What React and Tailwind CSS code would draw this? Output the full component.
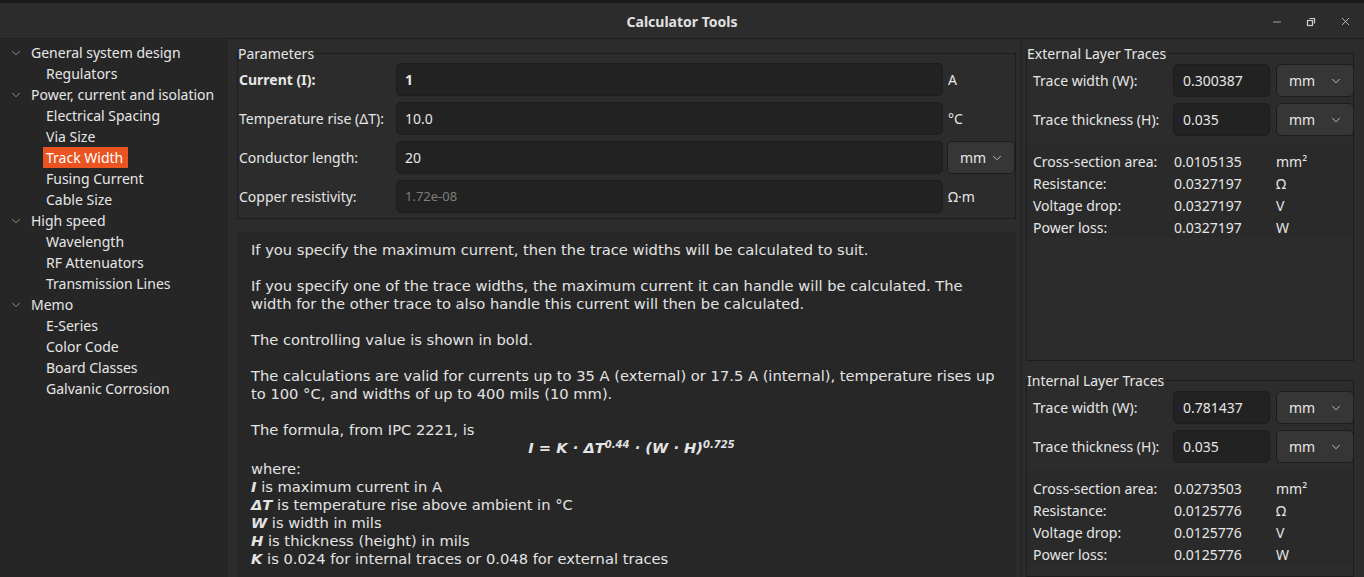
import { ChevronDown, Minus, X } from "lucide-react";

const ui = { fontFamily: '"Noto Sans", "Open Sans", sans-serif' };
const body = { fontFamily: '"DejaVu Sans", sans-serif' };

const tree = [
  { label: "General system design", children: ["Regulators"] },
  {
    label: "Power, current and isolation",
    children: ["Electrical Spacing", "Via Size", "Track Width", "Fusing Current", "Cable Size"],
  },
  { label: "High speed", children: ["Wavelength", "RF Attenuators", "Transmission Lines"] },
  { label: "Memo", children: ["E-Series", "Color Code", "Board Classes", "Galvanic Corrosion"] },
];

function Sidebar() {
  return (
    <div className="w-[228px] shrink-0 bg-[#262626] pt-[3px] text-[14px] text-[#e6e6e6]">
      {tree.map((g) => (
        <div key={g.label}>
          <div className="flex h-[21px] items-center">
            <ChevronDown className="ml-[9px] mr-[8px] h-[14px] w-[14px] text-[#9a9a9a]" strokeWidth={1.5} />
            <span>{g.label}</span>
          </div>
          {g.children.map((c) => (
            <div key={c} className="flex h-[21px] items-center pl-[43px]">
              {c === "Track Width" ? (
                <span className="flex h-[21px] items-center bg-[#e95420] pl-[3px] pr-[5px] text-white">{c}</span>
              ) : (
                <span className="px-[3px]">{c}</span>
              )}
            </div>
          ))}
        </div>
      ))}
    </div>
  );
}

function Dropdown({ className }) {
  return (
    <div
      className={
        "flex h-[33px] items-center justify-between rounded-[5px] border border-[#1d1d1d] bg-[#363636] pl-[12px] pr-[10px] text-[#e6e6e6] " +
        className
      }
    >
      <span>mm</span>
      <ChevronDown className="h-[14px] w-[14px] text-[#cfcfcf]" strokeWidth={1.5} />
    </div>
  );
}

function ParamRow({ label, value, unit, bold, muted, dropdown }) {
  return (
    <div className="flex h-[39px] items-center">
      <div className={"w-[158px] shrink-0 pl-[1px] " + (bold ? "font-bold" : "")}>{label}</div>
      <div
        className={
          "flex h-[33px] flex-1 items-center rounded-[5px] border border-[#1d1d1d] bg-[#222222] px-[8px] " +
          (bold ? "font-bold " : "") +
          (muted ? "text-[#7d7d7d] text-[13px]" : "")
        }
      >
        {value}
      </div>
      {dropdown ? (
        <Dropdown className="ml-[4px] w-[68px] text-[14px]" />
      ) : (
        <div className="w-[72px] shrink-0 pl-[5px]">{unit}</div>
      )}
    </div>
  );
}

function Group({ title, className, children }) {
  return (
    <div className={"relative " + className}>
      <div className="absolute left-0 top-[-9px] bg-[#2c2c2c] pr-[2px] text-[14px] leading-[18px] text-[#e6e6e6]">
        {title}
      </div>
      {children}
    </div>
  );
}

function LayerGroup({ title, width, results, className }) {
  return (
    <Group title={title} className={"border border-[#1d1d1d] " + className}>
      <div className="px-[5px] pt-[7px] pb-[4px]">
        <div className="flex h-[39px] items-center">
          <div className="w-[141px] shrink-0 pl-[1px]">Trace width (W):</div>
          <div className="flex h-[33px] w-[97px] items-center rounded-[5px] border border-[#1d1d1d] bg-[#222222] px-[9px]">
            {width}
          </div>
          <Dropdown className="ml-[6px] flex-1 mr-[-6px]" />
        </div>
        <div className="flex h-[39px] items-center">
          <div className="w-[141px] shrink-0 pl-[1px]">Trace thickness (H):</div>
          <div className="flex h-[33px] w-[97px] items-center rounded-[5px] border border-[#1d1d1d] bg-[#222222] px-[9px]">
            0.035
          </div>
          <Dropdown className="ml-[6px] flex-1 mr-[-6px]" />
        </div>
      </div>
      <div className="bg-[#2a2a2a] px-[5px] pt-[7px]">
        {results.map(([l, v, u]) => (
          <div key={l} className="flex h-[22px] items-center">
            <div className="w-[142px] shrink-0 pl-[1px]">{l}</div>
            <div className="w-[102px] shrink-0">{v}</div>
            <div>{u}</div>
          </div>
        ))}
      </div>
    </Group>
  );
}

function B({ children }) {
  return <span className="font-bold italic">{children}</span>;
}

export default function App() {
  return (
    <div className="flex h-[577px] w-[1364px] flex-col overflow-hidden bg-[#2c2c2c] text-[14px] text-[#e6e6e6]" style={ui}>
      {/* title bar */}
      <div className="h-[3px] bg-[#1a1a1a]" />
      <div className="relative flex h-[36px] shrink-0 items-center justify-center border-b border-[#1f1f1f] bg-[#2c2c2c] pt-[2px]">
        <span className="font-bold text-[#e0e0e0]">Calculator Tools</span>
        <div className="absolute right-[12px] top-0 flex h-full items-center gap-[23px] pt-[2px] text-[#cfcfcf]">
          <Minus className="h-[12px] w-[12px]" strokeWidth={1.5} />
          <svg width="10" height="10" viewBox="0 0 10 10" fill="none" stroke="currentColor" strokeWidth="1.2">
            <rect x="1.5" y="3.5" width="5" height="5" />
            <path d="M3.5 1.5h5v5" />
          </svg>
          <X className="h-[13px] w-[13px]" strokeWidth={1.5} />
        </div>
      </div>

      <div className="flex min-h-0 flex-1">
        <Sidebar />

        {/* center */}
        <div className="flex w-[794px] shrink-0 flex-col border-r border-[#222] pl-[9px] pr-[5px] pt-[14px]">
          <Group title="Parameters" className="border border-[#1d1d1d] pt-[6px] pb-[2px]">
            <ParamRow label="Current (I):" value="1" unit="A" bold />
            <ParamRow label="Temperature rise (ΔT):" value="10.0" unit="°C" />
            <ParamRow label="Conductor length:" value="20" dropdown />
            <ParamRow label="Copper resistivity:" value="1.72e-08" unit="Ω·m" muted />
          </Group>

          <div className="mt-[13px] flex-1 bg-[#272727] pl-[14px] pr-[12px] pt-[9px] text-[14.7px] leading-[18px] text-[#e3e3e3]" style={body}>
            <p>If you specify the maximum current, then the trace widths will be calculated to suit.</p>
            <p className="mt-[18px]">
              If you specify one of the trace widths, the maximum current it can handle will be calculated. The width
              for the other trace to also handle this current will then be calculated.
            </p>
            <p className="mt-[18px]">The controlling value is shown in bold.</p>
            <p className="mt-[18px]">
              The calculations are valid for currents up to 35 A (external) or 17.5 A (internal), temperature rises up
              to 100 °C, and widths of up to 400 mils (10 mm).
            </p>
            <p className="mt-[18px]">The formula, from IPC 2221, is</p>
            <p className="h-[21px] pl-[8px] text-center font-bold italic">
              I = K · ΔT<sup className="text-[10px]">0.44</sup> · (W · H)<sup className="text-[10px]">0.725</sup>
            </p>
            <p>where:</p>
            <p>
              <B>I</B> is maximum current in A
            </p>
            <p>
              <B>ΔT</B> is temperature rise above ambient in °C
            </p>
            <p>
              <B>W</B> is width in mils
            </p>
            <p>
              <B>H</B> is thickness (height) in mils
            </p>
            <p>
              <B>K</B> is 0.024 for internal traces or 0.048 for external traces
            </p>
          </div>
        </div>

        {/* right */}
        <div className="flex min-w-0 flex-1 flex-col pl-[4px] pr-[10px] pt-[14px]">
          <LayerGroup
            title="External Layer Traces"
            width="0.300387"
            className="h-[308px]"
            results={[
              ["Cross-section area:", "0.0105135", "mm²"],
              ["Resistance:", "0.0327197", "Ω"],
              ["Voltage drop:", "0.0327197", "V"],
              ["Power loss:", "0.0327197", "W"],
            ]}
          />
          <LayerGroup
            title="Internal Layer Traces"
            width="0.781437"
            className="mt-[19px] flex-1"
            results={[
              ["Cross-section area:", "0.0273503", "mm²"],
              ["Resistance:", "0.0125776", "Ω"],
              ["Voltage drop:", "0.0125776", "V"],
              ["Power loss:", "0.0125776", "W"],
            ]}
          />
        </div>
      </div>
    </div>
  );
}
